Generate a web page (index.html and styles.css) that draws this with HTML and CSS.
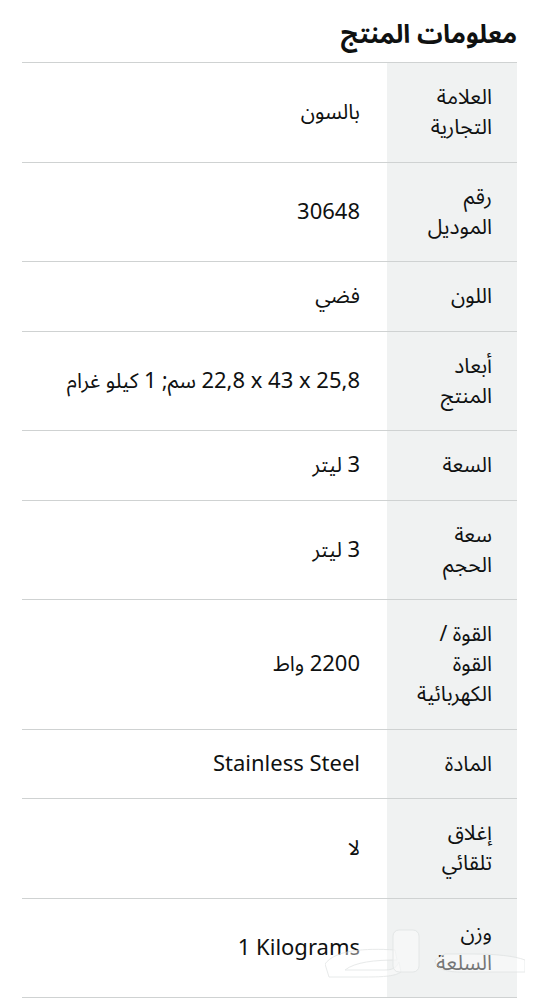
FILE: index.html
```html
<!DOCTYPE html>
<html lang="ar" dir="rtl">
<head>
<meta charset="utf-8">
<link rel="stylesheet" href="styles.css">
</head>
<body>
<div class="page">
  <h2 class="title">معلومات المنتج</h2>
  <table class="specs">
    <tr><th>العلامة التجارية</th><td>بالسون</td></tr>
    <tr><th>رقم الموديل</th><td><span class="lat">30648</span></td></tr>
    <tr><th>اللون</th><td>فضي</td></tr>
    <tr><th>أبعاد المنتج</th><td><span class="lat" dir="ltr">22,8 x 43 x 25,8</span> سم; <span class="lat">1</span> كيلو غرام</td></tr>
    <tr><th>السعة</th><td><span class="lat">3</span> ليتر</td></tr>
    <tr><th>سعة الحجم</th><td><span class="lat">3</span> ليتر</td></tr>
    <tr><th>القوة / القوة الكهربائية</th><td><span class="lat">2200</span> واط</td></tr>
    <tr><th>المادة</th><td><span class="lat" dir="ltr">Stainless Steel</span></td></tr>
    <tr><th>إغلاق تلقائي</th><td>لا</td></tr>
    <tr><th>وزن السلعة</th><td><span class="lat" dir="ltr">1 Kilograms</span></td></tr>
  </table>
  <svg class="watermark" width="200" height="60" viewBox="0 0 200 60" aria-hidden="true">
    <g fill="rgba(255,255,255,0.6)" stroke="#dfe2e2" stroke-width="1">
      <path d="M0 44 C10 30 40 28 70 30 L72 40 C50 40 30 42 20 50 L60 50 C70 50 72 46 74 42 L76 52 C70 56 60 57 40 57 L4 57 Z"/>
      <rect x="68" y="10" width="26" height="42" rx="6"/>
      <path d="M110 40 C110 48 120 52 135 52 L200 52 L200 40 C190 36 170 34 150 34 L120 34 Z"/>
    </g>
  </svg>
</div>
</body>
</html>
```

FILE: styles.css
```css
html, body {
  margin: 0;
  padding: 0;
  background: #ffffff;
}
body {
  font-family: "Noto Sans Arabic", "Noto Sans", "DejaVu Sans", sans-serif;
  color: #0f1111;
}
.page {
  position: relative;
  padding: 18px 23px 0 22px;
}
.title {
  margin: 0;
  font-size: 25.5px;
  font-weight: 700;
  line-height: 34px;
  height: 44px;
  text-align: right;
}
.specs {
  width: 100%;
  border-collapse: collapse;
  font-size: 21px;
  line-height: 30px;
}
.specs tr {
  border-top: 1px solid #cfd2d2;
  border-bottom: 1px solid #cfd2d2;
}
.specs th {
  width: 130px;
  box-sizing: border-box;
  background: #f0f2f2;
  font-weight: 400;
  text-align: right;
  vertical-align: middle;
  padding: 19.25px 25px 19.25px 18px;
}
.specs td {
  text-align: right;
  vertical-align: middle;
  padding: 19.25px 27px 19.25px 8px;
}
.lat {
  font-family: "Noto Sans", "DejaVu Sans", sans-serif;
  font-size: 22px;
  line-height: 18px;
}
.watermark {
  position: absolute;
  left: 325px;
  top: 920px;
  opacity: 0.7;
}
```
